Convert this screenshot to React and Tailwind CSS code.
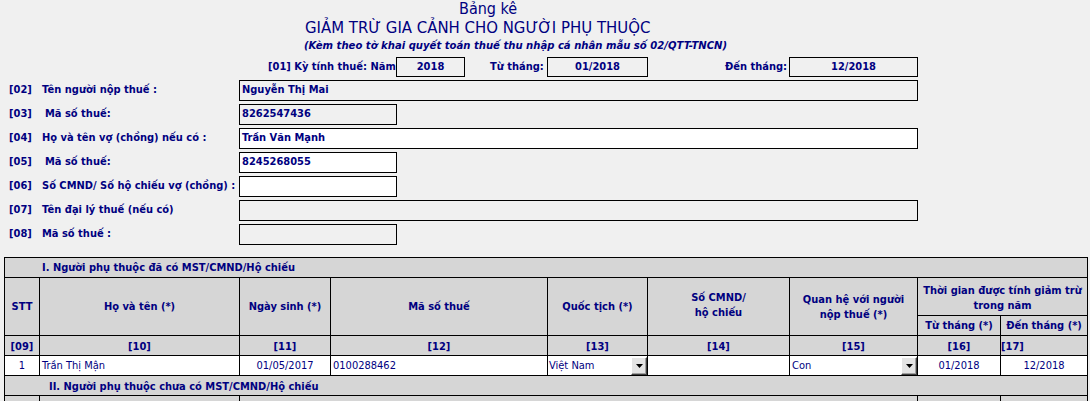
import React from "react";

const ff = "font-['DejaVu_Sans_Condensed','DejaVu_Sans',sans-serif]";

function FormRow({ code, label, value, wide, white, extra }) {
  return (
    <div className="flex h-[21px]">
      <div className="flex w-[239px] items-center font-bold text-[11px]">
        <span className="ml-[9px] w-[33px]">{code}</span>
        <span className={extra ? "pl-[3px]" : ""}>{label}</span>
      </div>
      <div
        className={`flex items-center border border-black pl-[2px] font-bold text-[11px] ${
          wide ? "w-[679px]" : "w-[158px]"
        } ${white ? "bg-white" : "bg-[#f0f0f0]"}`}
      >
        {value}
      </div>
    </div>
  );
}

function DropBtn() {
  return (
    <div className="ml-auto flex h-[18px] w-[16px] items-center justify-center border-t border-l border-t-white border-l-white border-r border-b border-r-[#404040] border-b-[#404040] bg-[#e4e4e4] shadow-[inset_-1px_-1px_0_#a0a0a0]">
      <svg width="7" height="4" viewBox="0 0 7 4">
        <path d="M0 0H7L3.5 4Z" fill="#000" />
      </svg>
    </div>
  );
}

export default function App() {
  const cell = "bg-[#d6d6d6] flex items-center justify-center text-center font-bold text-[11px] leading-[15px]";
  const dcell = "bg-white flex items-center text-[11px]";
  return (
    <div className={`w-[1090px] h-[401px] overflow-hidden bg-[#f0f0f0] text-[#000080] ${ff}`}>
      <div className="h-[17px] pl-[459px] text-[16px] leading-[17px]">Bảng kê</div>
      <div className="h-[19px] pl-[305px] text-[16.6px] leading-[21px] whitespace-nowrap">
        GIẢM TRỪ GIA CẢNH CHO NGƯỜI PHỤ THUỘC
      </div>
      <div className="h-[18px] pl-[304px] text-[11.2px] leading-[19px] font-bold italic whitespace-nowrap">
        (Kèm theo tờ khai quyết toán thuế thu nhập cá nhân mẫu số 02/QTT-TNCN)
      </div>

      <div className="mt-[3px] flex h-[20px] items-stretch font-bold text-[11px] whitespace-nowrap">
        <span className="ml-[268px] flex w-[128px] items-center">[01] Kỳ tính thuế: Năm</span>
        <div className="flex w-[69px] items-center justify-center border border-black">2018</div>
        <span className="flex w-[82px] items-center pl-[25px]">Từ tháng:</span>
        <div className="flex w-[101px] items-center justify-center border border-black">01/2018</div>
        <span className="flex w-[141px] items-center justify-end pr-[2px]">Đến tháng:</span>
        <div className="flex w-[129px] items-center justify-center border border-black">12/2018</div>
      </div>

      <div className="mt-[3px] flex flex-col gap-[3px] whitespace-nowrap">
        <FormRow code="[02]" label="Tên người nộp thuế :" value="Nguyễn Thị Mai" wide />
        <FormRow code="[03]" label="Mã số thuế:" value="8262547436" extra />
        <FormRow code="[04]" label="Họ và tên vợ (chồng) nếu có :" value="Trần Văn Mạnh" wide white />
        <FormRow code="[05]" label="Mã số thuế:" value="8245268055" white extra />
        <FormRow code="[06]" label="Số CMND/ Số hộ chiếu vợ (chồng) :" value="" white />
        <FormRow code="[07]" label="Tên đại lý thuế (nếu có)" value="" wide />
        <FormRow code="[08]" label="Mã số thuế :" value="" />
      </div>

      <div className="ml-[4px] mt-[12px] grid w-[1084px] grid-cols-[34px_199px_90px_216px_99px_141px_127px_82px_86px] grid-rows-[19px_37px_19px_19px_19px_19px_30px] gap-px bg-black p-px whitespace-nowrap">
        <div className={`${cell} col-span-9 justify-start pl-[37px]`}>I. Người phụ thuộc đã có MST/CMND/Hộ chiếu</div>

        <div className={`${cell} row-span-2`}>STT</div>
        <div className={`${cell} row-span-2`}>Họ và tên (*)</div>
        <div className={`${cell} row-span-2`}>Ngày sinh (*)</div>
        <div className={`${cell} row-span-2`}>Mã số thuế</div>
        <div className={`${cell} row-span-2`}>Quốc tịch (*)</div>
        <div className={`${cell} row-span-2 pb-[4px]`}>
          Số CMND/
          <br />
          hộ chiếu
        </div>
        <div className={`${cell} row-span-2`}>
          Quan hệ với người
          <br />
          nộp thuế (*)
        </div>
        <div className={`${cell} col-span-2 pt-[2px]`}>
          Thời gian được tính giảm trừ
          <br />
          trong năm
        </div>
        <div className={cell}>Từ tháng (*)</div>
        <div className={cell}>Đến tháng (*)</div>

        <div className={`${cell} pt-[2px]`}>[09]</div>
        <div className={`${cell} pt-[2px]`}>[10]</div>
        <div className={`${cell} pt-[2px]`}>[11]</div>
        <div className={`${cell} pt-[2px]`}>[12]</div>
        <div className={`${cell} pt-[2px]`}>[13]</div>
        <div className={`${cell} pt-[2px]`}>[14]</div>
        <div className={`${cell} pt-[2px]`}>[15]</div>
        <div className={`${cell} pt-[2px]`}>[16]</div>
        <div className={`${cell} justify-start pt-[2px]`}>[17]</div>

        <div className={`${dcell} justify-center pt-[2px]`}>1</div>
        <div className={`${dcell} pl-[2px] pt-[2px]`}>Trần Thị Mận</div>
        <div className={`${dcell} justify-center pt-[2px]`}>01/05/2017</div>
        <div className={`${dcell} pl-[2px] pt-[2px]`}>0100288462</div>
        <div className={`${dcell} pl-[1px]`}>
          <span className="pt-[2px]">Việt Nam</span>
          <DropBtn />
        </div>
        <div className={dcell}></div>
        <div className={`${dcell} pl-[2px]`}>
          <span className="pt-[2px]">Con</span>
          <DropBtn />
        </div>
        <div className={`${dcell} justify-center pt-[2px]`}>01/2018</div>
        <div className={`${dcell} justify-center pt-[2px]`}>12/2018</div>

        <div className={`${cell} col-span-9 justify-start pl-[44px] pt-[2px]`}>II. Người phụ thuộc chưa có MST/CMND/Hộ chiếu</div>

        <div className={cell}></div>
        <div className={cell}></div>
        <div className={`${cell} col-span-5`}></div>
        <div className={cell}></div>
        <div className={cell}></div>
      </div>
    </div>
  );
}
